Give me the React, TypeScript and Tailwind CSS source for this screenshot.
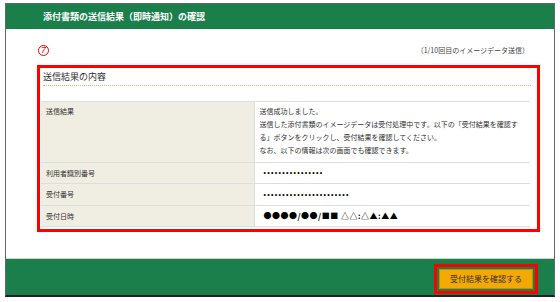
const rows = [
  { label: '利用者識別番号', value: '••••••••••••••••', kind: 'dots' },
  { label: '受付番号', value: '•••••••••••••••••••••••', kind: 'dots' },
  { label: '受付日時', value: '●●●●/●●/■■ △△:△▲:▲▲', kind: 'mark' },
];

export default function App() {
  return (
    <div className="w-[560px] h-[302px] bg-white pt-[3px] pl-[5px] font-['Noto_Sans_CJK_JP',sans-serif] text-[#333]">
      <div className="w-[550px] h-[294px] border border-[#666] border-b-2 border-b-[#222] flex flex-col">
        {/* Header */}
        <div className="h-[25px] shrink-0 bg-[#1b7f4c] flex items-center pl-[37px] text-white text-[9px] font-bold">
          添付書類の送信結果（即時通知）の確認
        </div>

        {/* Content */}
        <div className="flex-1 bg-white pt-[16px] pl-[31px] pr-[14px]">
          <div className="flex items-center justify-between h-[11px]">
            <div className="ml-[1px] w-[11px] h-[11px] rounded-full border border-[#e00] flex items-center justify-center text-[#e00] text-[9px] italic leading-none font-['Liberation_Sans',sans-serif]">
              7
            </div>
            <span className="mr-[11px] text-[7px] text-[#444]">〔1/10回目のイメージデータ送信〕</span>
          </div>

          <div className="mt-[9px] h-[167px] border-[3px] border-[#f00]">
            <div className="ml-[3px] mr-[6px] h-[18px] pt-[2px] border-b border-dotted border-[#d6b97a] text-[9px] leading-[14px] text-[#333]">
              送信結果の内容
            </div>
            <table className="mt-[15px] ml-[1px] w-[489px] border-collapse text-[7px] text-[#333]">
              <tbody>
                <tr className="h-[61px] border-y border-[#dedede]">
                  <td className="w-[213px] bg-[#f0ede2] align-top pl-[5px] pt-[3px] leading-[13px]">送信結果</td>
                  <td className="border-l border-[#dedede] align-top pl-[5px] pt-[3px] leading-[13px]">
                    <div>送信成功しました。</div>
                    <div className="whitespace-nowrap">送信した添付書類のイメージデータは受付処理中です。以下の「受付結果を確認す</div>
                    <div>る」ボタンをクリックし、受付結果を確認してください。</div>
                    <div>なお、以下の情報は次の画面でも確認できます。</div>
                  </td>
                </tr>
                {rows.map((row, i) => (
                  <tr key={row.label} className={`${i === 1 ? 'h-[22px]' : 'h-[21px]'} border-b border-[#dedede]`}>
                    <td className="bg-[#f0ede2] pl-[5px] align-middle">{row.label}</td>
                    <td className="border-l border-[#dedede] pl-[9px] align-middle">
                      {row.kind === 'dots' ? (
                        <span className="font-['Liberation_Sans',sans-serif] text-[7px] tracking-[1.3px] text-black">{row.value}</span>
                      ) : (
                        <span className="text-[8px] tracking-[0.5px] font-bold text-black">{row.value}</span>
                      )}
                    </td>
                  </tr>
                ))}
              </tbody>
            </table>
          </div>
        </div>

        {/* Footer */}
        <div className="h-[37px] shrink-0 bg-[#1b7f4c] border-t border-[#cfd8d2] flex justify-end items-start pt-[5px] pr-[16px]">
          <div className="border-[3px] border-[#f00] p-[2px]">
            <button className="w-[94px] h-[20px] bg-[#f4a900] border border-[#c98d00] text-[8px] text-[#333] flex items-center justify-center">
              受付結果を確認する
            </button>
          </div>
        </div>
      </div>
    </div>
  );
}
